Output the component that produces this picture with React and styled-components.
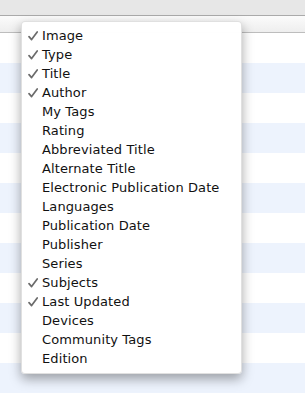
import styled, { createGlobalStyle } from "styled-components"

const GlobalStyle = createGlobalStyle`
    html, body {
        margin: 0;
        padding: 0;
        background: #fff;
    }

    body {
        font-family: "DejaVu Sans", "Liberation Sans", sans-serif;
        overflow: hidden;
    }
`

const columns = [
    { label: "Image", checked: true },
    { label: "Type", checked: true },
    { label: "Title", checked: true },
    { label: "Author", checked: true },
    { label: "My Tags" },
    { label: "Rating" },
    { label: "Abbreviated Title" },
    { label: "Alternate Title" },
    { label: "Electronic Publication Date" },
    { label: "Languages" },
    { label: "Publication Date" },
    { label: "Publisher" },
    { label: "Series" },
    { label: "Subjects", checked: true },
    { label: "Last Updated", checked: true },
    { label: "Devices" },
    { label: "Community Tags" },
    { label: "Edition" },
]

const CheckIcon = () => (
    <svg width="10" height="10" viewBox="0 0 10 10">
        <path
            d="M1 5.6 L3.6 8.6 L9.2 1"
            fill="none"
            stroke="#6b6b6b"
            strokeWidth="1.7"
            strokeLinecap="round"
            strokeLinejoin="round"
        />
    </svg>
)

const App = () => {
    const rows = Array.from({ length: 13 })

    return (
        <>
            <GlobalStyle />
            <Window>
                <Toolbar />
                <TableHeader />
                <Rows>
                    {rows.map((_, i) => (
                        <Row key={i} $striped={i % 2 === 1} />
                    ))}
                </Rows>

                <Menu>
                    {columns.map((item) => (
                        <MenuItem key={item.label}>
                            <Check>{item.checked && <CheckIcon />}</Check>
                            <Label>{item.label}</Label>
                        </MenuItem>
                    ))}
                </Menu>
            </Window>
        </>
    )
}

export default App

const Window = styled.div`
    position: relative;

    width: 305px;
    height: 397px;

    overflow: hidden;
`

const Toolbar = styled.div`
    height: 15px;

    background: #e7e7e7;
    border-bottom: 1px solid #aaaaaa;
`

const TableHeader = styled.div`
    height: 16px;

    background: linear-gradient(#fbfbfb, #eeeeee);
    border-bottom: 1px solid #bdbdbd;
`

const Rows = styled.div`
    display: flex;
    flex-direction: column;
`

const Row = styled.div`
    height: 30px;

    background: ${(props) => (props.$striped ? "#edf3fd" : "#ffffff")};
`

const Menu = styled.div`
    position: absolute;
    top: 21px;
    left: 21px;

    width: 221px;
    padding: 4px 0 5px;

    display: flex;
    flex-direction: column;

    background: rgba(255, 255, 255, 0.98);
    border: 1px solid rgba(0, 0, 0, 0.12);
    border-radius: 4px;
    box-shadow: 0 5px 12px rgba(0, 0, 0, 0.35);
    box-sizing: border-box;
`

const MenuItem = styled.div`
    height: 19px;

    display: flex;
    align-items: center;

    color: #111;
    font-size: 13px;
    letter-spacing: 0.1px;
    white-space: nowrap;
`

const Check = styled.span`
    width: 10px;
    height: 10px;
    margin: 0 4px 0 6px;

    display: flex;
`

const Label = styled.span`
    line-height: 19px;
`
